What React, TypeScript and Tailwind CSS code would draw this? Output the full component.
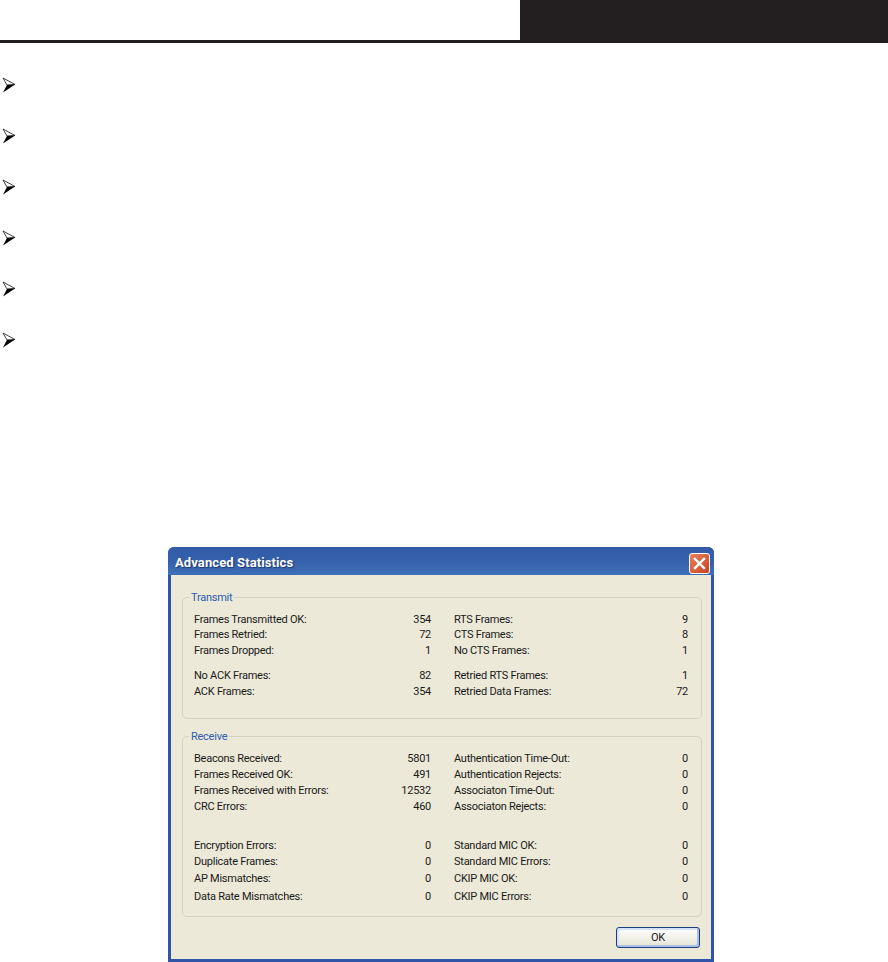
import React from 'react';

const transmitLeft = [
  ['Frames Transmitted OK:', '354', 'mt-0'],
  ['Frames Retried:', '72', 'mt-[-1px]'],
  ['Frames Dropped:', '1', 'mt-0'],
  ['No ACK Frames:', '82', 'mt-[9px]'],
  ['ACK Frames:', '354', 'mt-0'],
];

const transmitRight = [
  ['RTS Frames:', '9', 'mt-0'],
  ['CTS Frames:', '8', 'mt-[-1px]'],
  ['No CTS Frames:', '1', 'mt-0'],
  ['Retried RTS Frames:', '1', 'mt-[9px]'],
  ['Retried Data Frames:', '72', 'mt-0'],
];

const receiveLeft = [
  ['Beacons Received:', '5801', 'mt-0'],
  ['Frames Received OK:', '491', 'mt-0'],
  ['Frames Received with Errors:', '12532', 'mt-0'],
  ['CRC Errors:', '460', 'mt-0'],
  ['Encryption Errors:', '0', 'mt-[23px]'],
  ['Duplicate Frames:', '0', 'mt-0'],
  ['AP Mismatches:', '0', 'mt-[1px]'],
  ['Data Rate Mismatches:', '0', 'mt-[2px]'],
];

const receiveRight = [
  ['Authentication Time-Out:', '0', 'mt-0'],
  ['Authentication Rejects:', '0', 'mt-0'],
  ['Associaton Time-Out:', '0', 'mt-0'],
  ['Associaton Rejects:', '0', 'mt-0'],
  ['Standard MIC OK:', '0', 'mt-[23px]'],
  ['Standard MIC Errors:', '0', 'mt-0'],
  ['CKIP MIC OK:', '0', 'mt-[1px]'],
  ['CKIP MIC Errors:', '0', 'mt-[2px]'],
];

const Arrow = () => (
  <svg width="14" height="16" viewBox="0 0 14 16" className="block">
    <path d="M1 1 L13 7.5 L5 8 Z" fill="white" stroke="#111" strokeWidth="0.8" />
    <path d="M13 7.5 L1 15.5 L5 8 Z" fill="#000" />
  </svg>
);

const StatColumn = ({ rows, className }: { rows: string[][]; className: string }) => (
  <div className={className}>
    {rows.map(([label, value, gap]) => (
      <div key={label} className={`flex justify-between h-4 leading-4 ${gap}`}>
        <span>{label}</span>
        <span>{value}</span>
      </div>
    ))}
  </div>
);

const Group = ({
  title,
  left,
  right,
  className,
}: {
  title: string;
  left: string[][];
  right: string[][];
  className: string;
}) => (
  <div className={`relative border border-[#d3d2c0] rounded-[5px] flex ${className}`}>
    <span className="absolute left-[6px] top-[-8px] bg-[#ece9d8] px-[2px] h-4 leading-4 text-[#2b5cb0] text-[11px] tracking-[-0.25px]">
      {title}
    </span>
    <StatColumn rows={left} className="w-[237px]" />
    <StatColumn rows={right} className="w-[234px] ml-[23px]" />
  </div>
);

export default function App() {
  return (
    <div className="w-[888px] h-[962px] bg-white overflow-hidden font-['Roboto',sans-serif]">
      {/* Page header */}
      <div className="flex justify-end h-10">
        <div className="w-[368px] bg-[#231f20]" />
      </div>
      <div className="h-[3px] bg-[#231f20]" />

      {/* Bullets */}
      <div className="mt-[34px] pl-[2px] flex flex-col gap-[35px]">
        <Arrow />
        <Arrow />
        <Arrow />
        <Arrow />
        <Arrow />
        <Arrow />
      </div>

      {/* Dialog */}
      <div className="ml-[168px] mt-[199px] w-[546px] h-[415px] flex flex-col rounded-t-[6px] bg-[#2f54a8] px-[3px] pb-[3px] overflow-hidden">
        <div className="-mx-[3px] h-[28px] pt-[4px] shrink-0 flex items-center justify-between pl-[7px] pr-[4px] bg-gradient-to-b from-[#335ca8] via-[#3560ab] to-[#3e6fb8]">
          <span className="text-white font-bold text-[13px] tracking-[0.1px] [text-shadow:1px_1px_1px_#1c3570]">
            Advanced Statistics
          </span>
          <div className="w-[21px] h-[21px] rounded-[3px] border border-white bg-gradient-to-br from-[#e8805c] to-[#c9401f] flex items-center justify-center">
            <svg width="13" height="13" viewBox="0 0 13 13">
              <path d="M2 2 L11 11 M11 2 L2 11" stroke="white" strokeWidth="2.4" strokeLinecap="square" />
            </svg>
          </div>
        </div>
        <div className="flex-1 bg-[#ece9d8] text-[#1a1a1a] text-[11px] tracking-[-0.25px] pl-[11px] pr-[9px] pt-[22px]">
          <Group title="Transmit" left={transmitLeft} right={transmitRight} className="h-[122px] pl-[11px] pt-[14px]" />
          <Group title="Receive" left={receiveLeft} right={receiveRight} className="h-[181px] mt-[17px] pl-[11px] pt-[14px]" />
          <div className="flex justify-end mt-[10px] pr-[2px]">
            <div className="w-[84px] h-[21px] pt-[1px] rounded-[3px] border border-[#1c3f7c] bg-gradient-to-b from-white to-[#e6e4d6] flex items-center justify-center text-[11px] shadow-[inset_-2px_-2px_0_#a9c1e6,inset_2px_2px_0_#d5e2f5]">
              OK
            </div>
          </div>
        </div>
      </div>
    </div>
  );
}
